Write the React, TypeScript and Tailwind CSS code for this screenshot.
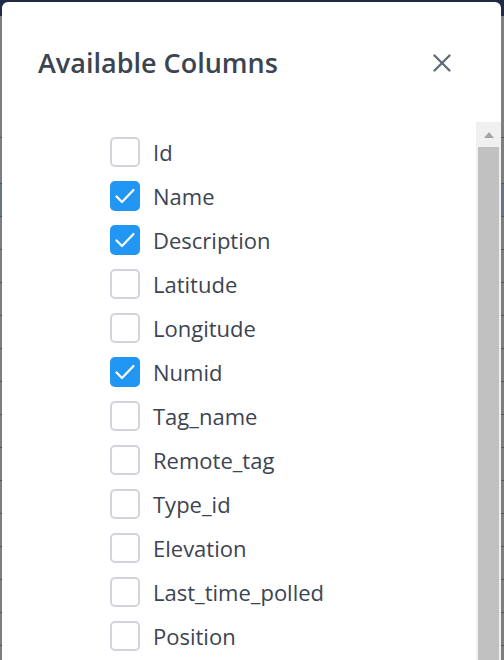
import { X } from "lucide-react";

const columns = [
  { name: "Id", checked: false },
  { name: "Name", checked: true },
  { name: "Description", checked: true },
  { name: "Latitude", checked: false },
  { name: "Longitude", checked: false },
  { name: "Numid", checked: true },
  { name: "Tag_name", checked: false },
  { name: "Remote_tag", checked: false },
  { name: "Type_id", checked: false },
  { name: "Elevation", checked: false },
  { name: "Last_time_polled", checked: false },
  { name: "Position", checked: false },
];

// row lines of the table behind the backdrop
const rowLines = [37, 83, 116, 149, 182, 215, 248, 281, 314, 347, 380, 413, 446, 479, 512, 545, 578, 611, 644];

function Checkbox({ checked }: { checked: boolean }) {
  if (checked) {
    return (
      <span className="flex h-[30px] w-[30px] shrink-0 items-center justify-center rounded-[5px] bg-[#2196f3]">
        <svg width="24" height="24" viewBox="0 0 24 24" fill="none" stroke="white" strokeWidth="2.2" strokeLinecap="round" strokeLinejoin="round">
          <path d="M3.5 12.5l5.5 5.5L20.5 6" />
        </svg>
      </span>
    );
  }
  return <span className="h-[30px] w-[30px] shrink-0 rounded-[5px] border-2 border-[#d1d5db] bg-white" />;
}

export default function App() {
  return (
    <div className="relative h-[660px] w-[504px] overflow-hidden bg-[#7f7f7f]" style={{ fontFamily: "'Open Sans', 'Noto Sans', sans-serif" }}>
      <div className="absolute inset-x-0 top-0 h-4 bg-[#1f2c46]" />
      <div className="absolute left-0 top-[183px] h-[33px] w-full bg-[#6b7580]" />
      {rowLines.map((y) => (
        <div key={y} className="absolute left-0 h-px w-full bg-[#555]" style={{ top: 100 + y }} />
      ))}

      <div className="absolute left-[2px] top-[2px] flex h-[700px] w-[499px] flex-col rounded-md bg-white">
        <div className="flex h-[120px] shrink-0 items-start justify-between pl-9 pr-[44px] pt-[43px]">
          <h2 className="text-[27px] leading-9 font-semibold text-[#3d4451]">Available Columns</h2>
          <button className="mt-[3px] text-[#5f6b78]">
            <X size={30} strokeWidth={1.9} />
          </button>
        </div>
        <div className="flex min-h-0 flex-1">
          <ul className="flex flex-1 flex-col pl-[108px] pt-2">
            {columns.map((c) => (
              <li key={c.name} className="flex h-[44px] items-center gap-[13px]">
                <Checkbox checked={c.checked} />
                <span className="text-[22px] text-[#3d4451]">{c.name}</span>
              </li>
            ))}
          </ul>
          <div className="flex w-[25px] shrink-0 flex-col bg-[#f0f0f0] px-[2px]">
            <div className="flex h-[25px] items-center justify-center">
              <svg width="10" height="6" viewBox="0 0 10 6">
                <path d="M5 0L10 6H0z" fill="#a3a3a3" />
              </svg>
            </div>
            <div className="flex-1 bg-[#c1c1c1]" />
          </div>
        </div>
      </div>
    </div>
  );
}
